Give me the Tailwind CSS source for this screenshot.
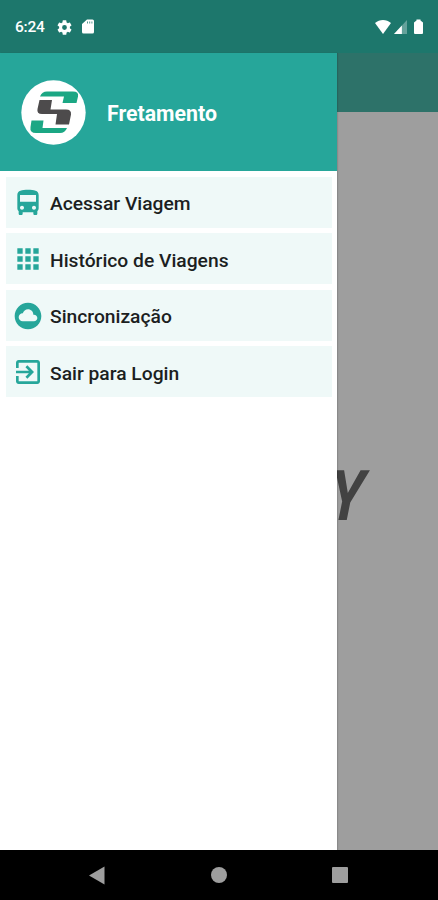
<!DOCTYPE html>
<html lang="pt-BR">
<head>
<meta charset="utf-8">
<title>Fretamento</title>
<script src="https://cdn.jsdelivr.net/npm/@tailwindcss/browser@4"></script>
</head>
<body class="bg-black font-['Roboto',sans-serif]">
<div class="w-[438px] h-[900px] flex flex-col overflow-hidden">
  <header class="h-[53px] shrink-0 bg-[#1d776c] flex items-center text-white pl-[15px] pr-[14px]">
    <span class="text-[15.5px] font-medium leading-none w-[42px] pt-[2px] tracking-[-0.2px]">6:24</span>
    <svg class="w-[15px] h-[15px] mt-px" viewBox="2 2 20 20" fill="currentColor"><path d="M19.14 12.94c.04-.3.06-.61.06-.94s-.02-.64-.07-.94l2.03-1.58a.49.49 0 0 0 .12-.61l-1.92-3.32a.49.49 0 0 0-.59-.22l-2.39.96a7 7 0 0 0-1.62-.94l-.36-2.54a.48.48 0 0 0-.48-.41h-3.84a.48.48 0 0 0-.47.41l-.36 2.54c-.59.24-1.13.57-1.62.94l-2.39-.96a.48.48 0 0 0-.59.22L2.74 8.87a.48.48 0 0 0 .12.61l2.03 1.58a6 6 0 0 0 0 1.88l-2.03 1.58a.49.49 0 0 0-.12.61l1.92 3.32c.12.22.37.29.59.22l2.39-.96c.5.38 1.03.7 1.62.94l.36 2.54c.05.24.24.41.48.41h3.84c.24 0 .44-.17.47-.41l.36-2.54c.59-.24 1.13-.56 1.62-.94l2.39.96c.22.08.47 0 .59-.22l1.92-3.32a.48.48 0 0 0-.12-.61zM12 15.2a3.2 3.2 0 1 1 0-6.400 3.200 3.200 0 0 1 0 6.400z"/></svg>
    <svg class="w-3 h-[15px] ml-[10px]" viewBox="0 0 12 15"><path d="M5 .5h5.5A1.5 1.5 0 0 1 12 2v11a1.5 1.5 0 0 1-1.500 1.500h-9A1.500 1.500 0 0 1 0 13V5z" fill="#fff"/><path d="M5 2.500h1v2H5zM7.200 2.500h1v2h-1zM9.400 2.500h1v2h-1z" fill="#1d776c" opacity=".75"/></svg>
    <span class="grow"></span>
    <svg class="w-[16px] h-[14px]" viewBox="0 0 17 14" preserveAspectRatio="none"><path d="M0 3C5-.9 12-.9 17 3L8.500 14z" fill="#fff"/></svg>
    <svg class="w-[13px] h-[14px] ml-[3px]" viewBox="0 0 14 14" preserveAspectRatio="none"><path d="M0 14 14 0v14z" fill="#fff" opacity=".32"/><path d="M0 14 8.500 5.500V14z" fill="#fff"/></svg>
    <svg class="w-[9px] h-[15px] ml-[7px] mr-px" viewBox="0 0 9 15"><path d="M2.500 1.500V.5h4v1L9 3.500V14a1 1 0 0 1-1 1H1a1 1 0 0 1-1-1V3.500z" fill="#fff"/></svg>
  </header>

  <main class="h-[797px] shrink-0 flex">
    <nav class="w-[337px] shrink-0 bg-white relative z-10 shadow-[1px_0_1px_rgba(0,0,0,0.12)]">
      <div class="h-[118px] bg-[#26a69a] flex items-center pl-[21px]">
        <svg class="w-[65px] h-[65px]" viewBox="0 0 65 65">
          <circle cx="32.500" cy="32.500" r="32.200" fill="#fff"/>
          <path d="M19 16.500Q21 11.500 26 11.500H52Q58 11.500 57 16.500L55.500 23H41.500L43 16.500z" fill="#1ba784"/>
          <path d="M18.500 20H31L29.500 29.500H45Q50.500 29.500 50 34.500L48 44.500H34.500L36 34H21Q15.500 34 16.500 29z" fill="#4d4b4c"/>
          <path d="M10.500 40.500H22.500L21.500 48H46Q44 53 39 53H15Q8.500 53 9.500 47z" fill="#1ba784"/>
        </svg>
        <h1 class="ml-[21px] text-[22px] font-bold text-white leading-none pt-[4px] origin-left scale-x-[0.968]">Fretamento</h1>
      </div>
      <ul class="pt-[6px] pl-[6px] pr-[5px] flex flex-col gap-[5.400px] text-[#26a69a]">
        <li class="h-[51px] bg-[#eff9f8] flex items-center pl-[6px] pt-[0.5px]">
          <svg class="w-8 h-8" viewBox="0 0 24 24" fill="currentColor"><path d="M4 16c0 .88.39 1.67 1 2.220V20c0 .55.45 1 1 1h1c.55 0 1-.45 1-1v-1h8v1c0 .55.45 1 1 1h1c.55 0 1-.45 1-1v-1.780c.61-.55 1-1.340 1-2.220V6c0-3.500-3.580-4-8-4s-8 .5-8 4v10zm3.500 1c-.83 0-1.500-.67-1.500-1.500S6.670 14 7.500 14s1.500.67 1.500 1.500S8.330 17 7.500 17zm9 0c-.83 0-1.500-.67-1.500-1.500s.67-1.500 1.500-1.500 1.500.67 1.500 1.500-.67 1.500-1.500 1.500zm1.500-6H6V6h12v5z"/></svg>
          <span class="ml-[6px] pt-[2px] text-[19.25px] font-medium text-[#1c1f1f] leading-none">Acessar Viagem</span>
        </li>
        <li class="h-[51px] bg-[#eff9f8] flex items-center pl-[6px] pt-[0.5px]">
          <svg class="w-8 h-8" viewBox="0 0 24 24" fill="currentColor"><path d="M4 8h4V4H4v4zm6 12h4v-4h-4v4zm-6 0h4v-4H4v4zm0-6h4v-4H4v4zm6 0h4v-4h-4v4zm6-10v4h4V4h-4zm-6 4h4V4h-4v4zm6 6h4v-4h-4v4zm0 6h4v-4h-4v4z"/></svg>
          <span class="ml-[6px] pt-[3px] text-[19.25px] font-medium text-[#1c1f1f] leading-none">Histórico de Viagens</span>
        </li>
        <li class="h-[51px] bg-[#eff9f8] flex items-center pl-[6px] pt-px">
          <svg class="w-8 h-8" viewBox="0 0 24 24" fill="currentColor"><path d="M12 2C6.480 2 2 6.480 2 12s4.480 10 10 10 10-4.480 10-10S17.520 2 12 2zm4.500 14H8c-1.660 0-3-1.340-3-3s1.340-3 3-3l.14.010C8.580 8.280 10.130 7 12 7c2.210 0 4 1.790 4 4h.5c1.380 0 2.500 1.120 2.500 2.500S17.880 16 16.500 16z"/></svg>
          <span class="ml-[6px] pt-[2px] text-[19.25px] font-medium text-[#1c1f1f] leading-none">Sincronização</span>
        </li>
        <li class="h-[51px] bg-[#eff9f8] flex items-center pl-[6px] pt-px">
          <svg class="w-8 h-8" viewBox="0 0 24 24" fill="currentColor"><path d="M10.090 15.590L11.500 17l5-5-5-5-1.410 1.410L12.670 11H3v2h9.670l-2.580 2.590zM19 3H5c-1.110 0-2 .9-2 2v4h2V5h14v14H5v-4H3v4c0 1.100.89 2 2 2h14c1.100 0 2-.9 2-2V5c0-1.100-.9-2-2-2z"/></svg>
          <span class="ml-[6px] pt-[2px] text-[19.25px] font-medium text-[#1c1f1f] leading-none">Sair para Login</span>
        </li>
      </ul>
    </nav>
    <section class="grow flex flex-col bg-[#9e9e9e]">
      <div class="h-[59px] shrink-0 bg-[#2d7269]"></div>
      <div class="pt-[349px] flex">
        <span class="-ml-[15px] text-[70px] leading-[70px] font-bold italic text-[#424242] origin-right scale-x-[0.82] skew-x-[-4deg]">Y</span>
      </div>
    </section>
  </main>

  <footer class="h-[50px] shrink-0 bg-black flex items-center justify-between pl-[89px] pr-[90px]">
    <svg class="w-4 h-[19px]" viewBox="0 0 16 19"><path d="M0 9.500 15.500.5v18z" fill="#9e9e9e"/></svg>
    <span class="w-4 h-4 rounded-full bg-[#9e9e9e]"></span>
    <span class="w-4 h-4 rounded-[1px] bg-[#9e9e9e]"></span>
  </footer>
</div>
</body>
</html>
